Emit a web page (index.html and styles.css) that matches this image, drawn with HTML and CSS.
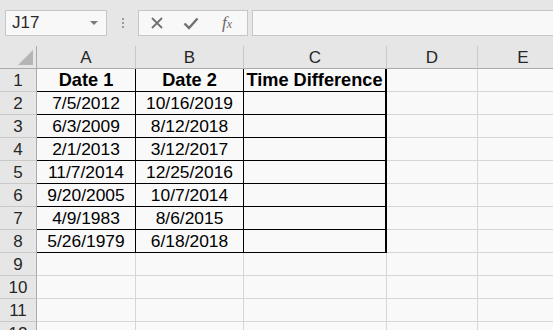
FILE: index.html
```html
<!DOCTYPE html>
<html>
<head>
<meta charset="utf-8">
<link rel="stylesheet" href="styles.css">
</head>
<body>
<div class="app">
  <div class="toolbar">
    <div class="namebox">
      <span class="ref">J17</span>
      <span class="caret"></span>
    </div>
    <div class="grip"><i></i><i></i><i></i></div>
    <div class="fbtns">
      <svg class="ico x" width="14" height="14" viewBox="0 0 14 14"><path d="M2 2 L12 12 M12 2 L2 12" stroke="#707070" stroke-width="1.8" fill="none"/></svg>
      <svg class="ico ok" width="16" height="14" viewBox="0 0 16 14"><path d="M1.5 7.5 L6 12 L14.5 2.5" stroke="#707070" stroke-width="2.4" fill="none"/></svg>
      <span class="fx">f<small>x</small></span>
    </div>
    <div class="finput"></div>
  </div>
  <div class="sheet">
    <div class="corner"><span class="tri"></span></div>
    <div class="ch">A</div><div class="ch">B</div><div class="ch">C</div><div class="ch">D</div><div class="ch">E</div>

    <div class="rh">1</div><div class="c t b">Date 1</div><div class="c t b">Date 2</div><div class="c t b tr">Time Difference</div><div class="c"></div><div class="c"></div>
    <div class="rh">2</div><div class="c t">7/5/2012</div><div class="c t">10/16/2019</div><div class="c t tr"></div><div class="c"></div><div class="c"></div>
    <div class="rh">3</div><div class="c t">6/3/2009</div><div class="c t">8/12/2018</div><div class="c t tr"></div><div class="c"></div><div class="c"></div>
    <div class="rh">4</div><div class="c t">2/1/2013</div><div class="c t">3/12/2017</div><div class="c t tr"></div><div class="c"></div><div class="c"></div>
    <div class="rh">5</div><div class="c t">11/7/2014</div><div class="c t">12/25/2016</div><div class="c t tr"></div><div class="c"></div><div class="c"></div>
    <div class="rh">6</div><div class="c t">9/20/2005</div><div class="c t">10/7/2014</div><div class="c t tr"></div><div class="c"></div><div class="c"></div>
    <div class="rh">7</div><div class="c t">4/9/1983</div><div class="c t">8/6/2015</div><div class="c t tr"></div><div class="c"></div><div class="c"></div>
    <div class="rh">8</div><div class="c t">5/26/1979</div><div class="c t">6/18/2018</div><div class="c t tr"></div><div class="c"></div><div class="c"></div>
    <div class="rh">9</div><div class="c"></div><div class="c"></div><div class="c"></div><div class="c"></div><div class="c"></div>
    <div class="rh">10</div><div class="c"></div><div class="c"></div><div class="c"></div><div class="c"></div><div class="c"></div>
    <div class="rh">11</div><div class="c"></div><div class="c"></div><div class="c"></div><div class="c"></div><div class="c"></div>
    <div class="rh">12</div><div class="c"></div><div class="c"></div><div class="c"></div><div class="c"></div><div class="c"></div>
  </div>
</div>
</body>
</html>
```

FILE: styles.css
```css
* { box-sizing: border-box; margin: 0; padding: 0; }
html, body { width: 553px; height: 330px; overflow: hidden; background: #e6e6e6; }
body { font-family: "Liberation Sans", Arial, sans-serif; color: #000; }

.app { display: flex; flex-direction: column; width: 553px; height: 330px; overflow: hidden; }

.toolbar {
  height: 46px;
  flex: none;
  display: flex;
  align-items: flex-start;
  padding-top: 10px;
  padding-left: 5px;
  background: #e6e6e6;
}
.namebox {
  width: 102px;
  height: 26px;
  background: #f8f8f8;
  border: 1px solid #c6c6c6;
  display: flex;
  align-items: center;
  justify-content: space-between;
  padding: 0 8px 0 6px;
}
.ref { font-size: 17px; color: #2a2a2a; }
.caret {
  width: 0; height: 0;
  border-left: 4px solid transparent;
  border-right: 4px solid transparent;
  border-top: 4px solid #7a7a7a;
}
.grip {
  width: 31px;
  height: 26px;
  display: flex;
  flex-direction: column;
  align-items: center;
  justify-content: center;
  gap: 2px;
}
.grip i { display: block; width: 2px; height: 2px; background: #9a9a9a; }
.fbtns {
  width: 110px;
  height: 26px;
  background: #f8f8f8;
  border: 1px solid #c6c6c6;
  display: flex;
  align-items: center;
  padding-left: 11px;
}
.fbtns .ico { display: block; }
.fbtns .ok { margin-left: 19px; }
.fx {
  font-family: "Liberation Serif", "Times New Roman", serif;
  font-style: italic;
  font-size: 17px;
  color: #6a6a6a;
  margin-left: 23px;
  line-height: 1;
  padding-bottom: 2px;
}
.fx small { font-size: 12px; }
.finput {
  margin-left: 4px;
  flex: 1;
  height: 26px;
  background: #f8f8f8;
  border: 1px solid #c6c6c6;
  border-right: none;
}

.sheet {
  display: grid;
  grid-template-columns: 37px 99px 108px 143px 91px 91px;
  grid-template-rows: 23px;
  grid-auto-rows: 23px;
  background: #f9f9f9;
}
.corner {
  background: #e6e6e6;
  border-right: 1px solid #ababab;
  border-bottom: 1px solid #ababab;
  position: relative;
}
.tri {
  position: absolute;
  right: 3px;
  bottom: 3px;
  width: 0; height: 0;
  border-left: 15px solid transparent;
  border-bottom: 15px solid #b5b5b5;
}
.ch {
  background: #e6e6e6;
  border-right: 1px solid #c9c9c9;
  border-bottom: 1px solid #ababab;
  font-size: 17px;
  color: #262626;
  display: flex;
  align-items: center;
  justify-content: center;
  padding-top: 2px;
}
.rh {
  background: #e6e6e6;
  border-right: 1px solid #ababab;
  border-bottom: 1px solid #c9c9c9;
  font-size: 17px;
  color: #262626;
  display: flex;
  align-items: center;
  justify-content: center;
  padding-top: 1px;
}
.c {
  border-right: 1px solid #d6d6d6;
  border-bottom: 1px solid #d6d6d6;
  font-size: 17.4px;
  display: flex;
  align-items: center;
  justify-content: center;
  white-space: nowrap;
  padding-top: 1px;
}
.c.t { border-right-color: #000; border-bottom-color: #000; }
.c.tr { border-right: 2px solid #000; }
.c.b { font-weight: bold; font-size: 18.2px; }
```
